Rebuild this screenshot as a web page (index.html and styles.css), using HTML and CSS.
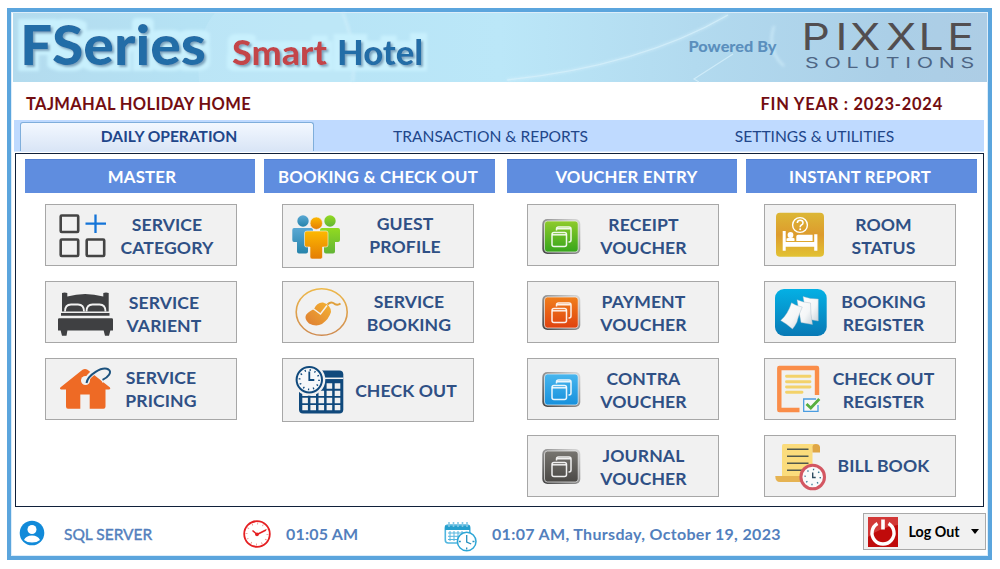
FILE: index.html
```html
<!DOCTYPE html>
<html lang="en">
<head>
<meta charset="utf-8">
<title>FSeries Smart Hotel</title>
<link rel="stylesheet" href="styles.css">
</head>
<body>
<svg class="defs" width="0" height="0">
  <defs>
    <linearGradient id="steel" x1="1" y1="0" x2="0" y2="1"><stop offset="0" stop-color="#ddd"/><stop offset=".45" stop-color="#999"/><stop offset="1" stop-color="#444"/></linearGradient>
    <linearGradient id="green" x1="0" y1="0" x2="0" y2="1"><stop offset="0" stop-color="#8fcb2c"/><stop offset="1" stop-color="#36a51c"/></linearGradient>
    <linearGradient id="orange" x1="0" y1="0" x2="0" y2="1"><stop offset="0" stop-color="#f07f1c"/><stop offset="1" stop-color="#e0420f"/></linearGradient>
    <linearGradient id="blue" x1="0" y1="0" x2="0" y2="1"><stop offset="0" stop-color="#48b6ee"/><stop offset="1" stop-color="#1690dc"/></linearGradient>
    <linearGradient id="gray" x1="0" y1="0" x2="0" y2="1"><stop offset="0" stop-color="#777570"/><stop offset="1" stop-color="#4b4946"/></linearGradient>
    <g id="windows" fill="none" stroke="#fff" stroke-opacity=".9" stroke-width="1.5">
      <path d="M29.500 26v-1.500q0-2 2-2h10.500q2 0 2 2v11q0 2-2 2h-.500M30 24.200h14"/>
      <rect x="25" y="28" width="14.500" height="14" rx="2"/><path d="M25 30.300h14.500"/>
    </g>
    <linearGradient id="pb" x1="0" y1="0" x2="0" y2="1"><stop offset="0" stop-color="#5aa8d4"/><stop offset="1" stop-color="#2583ab"/></linearGradient>
    <linearGradient id="pg" x1="0" y1="0" x2="0" y2="1"><stop offset="0" stop-color="#92da20"/><stop offset="1" stop-color="#62b436"/></linearGradient>
    <linearGradient id="po" x1="0" y1="0" x2="0" y2="1"><stop offset="0" stop-color="#fdb900"/><stop offset="1" stop-color="#e47d05"/></linearGradient>
    <linearGradient id="mouse" x1="1" y1="0" x2="0" y2="1"><stop offset="0" stop-color="#f5b331"/><stop offset="1" stop-color="#dd7d33"/></linearGradient>
    <linearGradient id="ring" x1="0" y1="0" x2="0" y2="1"><stop offset="0" stop-color="#edb84a"/><stop offset="1" stop-color="#cf8b50"/></linearGradient>
    <linearGradient id="gold" x1="0" y1="0" x2="0" y2="1"><stop offset="0" stop-color="#dcb735"/><stop offset=".5" stop-color="#dd9b2d"/><stop offset="1" stop-color="#e2c233"/></linearGradient>
    <linearGradient id="cyan" x1="0" y1="0" x2="0" y2="1"><stop offset="0" stop-color="#04b0e4"/><stop offset="1" stop-color="#0879b5"/></linearGradient>
    <linearGradient id="paper" x1="0" y1="0" x2="1" y2="1"><stop offset="0" stop-color="#fff"/><stop offset=".6" stop-color="#f4f6f7"/><stop offset="1" stop-color="#cbd5dc"/></linearGradient>
  </defs>
</svg>

<div class="window">
  <header class="banner">
    <svg width="974" height="69" viewBox="13 13 974 69">
      <defs>
        <linearGradient id="sky" x1="0" y1="0" x2="1" y2="0"><stop offset="0" stop-color="#b3dbee"/><stop offset=".18" stop-color="#b5e2f4"/><stop offset=".5" stop-color="#bbe7f8"/><stop offset=".7" stop-color="#b2daef"/><stop offset=".9" stop-color="#abcfe7"/><stop offset="1" stop-color="#adcde5"/></linearGradient>
        <filter id="soft" x="-10%" y="-20%" width="120%" height="150%"><feGaussianBlur stdDeviation="1.6"/></filter>
        <filter id="halo" filterUnits="userSpaceOnUse" x="13" y="13" width="460" height="69">
          <feMorphology in="SourceAlpha" operator="dilate" radius="6" result="fat"/>
          <feGaussianBlur in="fat" stdDeviation="1.6" result="fatSoft"/>
          <feFlood flood-color="#c8f0fd"/><feComposite in2="fatSoft" operator="in" result="glow"/>
          <feGaussianBlur in="SourceAlpha" stdDeviation="1.3" result="s"/><feOffset in="s" dx="1.5" dy="2.2" result="so"/>
          <feFlood flood-color="#336a97" flood-opacity=".7"/><feComposite in2="so" operator="in" result="shadow"/>
          <feMerge><feMergeNode in="glow"/><feMergeNode in="shadow"/><feMergeNode in="SourceGraphic"/></feMerge>
        </filter>
      </defs>
      <rect x="13" y="13" width="974" height="69" fill="url(#sky)"/>
      <path d="M215 13Q195 35 199 82H352Q356 45 343 13Z" fill="#c6ebf9" opacity=".4"/>
      <g fill="none" stroke="#d8f2fc" stroke-width="2" opacity=".75" filter="url(#soft)">
        <path d="M343 13Q357 45 353 82M507 80Q640 66 728 15M774 26Q766 50 784 66"/>
      </g>
      <path d="M733 54L694 79l5 3M507 80Q640 66 728 15" fill="none" stroke="#d5effa" stroke-width="1.200" opacity=".8"/>
      <g class="brand" filter="url(#halo)">
        <text x="20" y="65" font-size="56" fill="#206da7" textLength="186" lengthAdjust="spacingAndGlyphs">FSeries</text>
        <text x="232" y="65" font-size="34" fill="#c34449" textLength="95" lengthAdjust="spacingAndGlyphs">Smart</text>
        <text x="337" y="65" font-size="34" fill="#206da7" textLength="86" lengthAdjust="spacingAndGlyphs">Hotel</text>
      </g>
      <text class="powered" x="688.500" y="51.500" textLength="88" lengthAdjust="spacingAndGlyphs">Powered By</text>
      <text class="pixxle" transform="translate(802 50) scale(1.2 1)" x="-.500 28 40 70 97 121">PIXXLE</text>
      <text class="solutions" x="805" y="67.500" textLength="175" lengthAdjust="spacingAndGlyphs">SOLUTIONS</text>
    </svg>
  </header>

  <div class="company"><span class="name">TAJMAHAL HOLIDAY HOME</span><span class="year">FIN YEAR : 2023-2024</span></div>

  <nav class="tabs">
    <div class="tab active">DAILY OPERATION</div>
    <div class="tab second">TRANSACTION &amp; REPORTS</div>
    <div class="tab third">SETTINGS &amp; UTILITIES</div>
  </nav>

  <main class="panel">
    <section class="column">
      <h2>MASTER</h2>
      <button class="tile t-category">
        <svg viewBox="0 0 64 62"><g fill="none" stroke="#444" stroke-width="2.600"><rect x="15.700" y="11.500" width="17.500" height="16.500" rx="1"/><rect x="15.700" y="35.500" width="17.500" height="16.500" rx="1"/><rect x="41.700" y="35.500" width="17.500" height="16.500" rx="1"/></g><path d="M50.500 10.500V29M40.500 19.700H61" stroke="#1474d8" stroke-width="2.300"/></svg>
        <span>SERVICE<br>CATEGORY</span></button>
      <button class="tile t-varient">
        <svg viewBox="0 0 64 62"><g fill="#3f4042"><path d="M17 12q2.600-1 5.300 0v3.500Q40 10.500 58.300 15.500V12q2.700-1 5.400 0v18.500H17Z"/><path d="M16 32h48.500v2.700H16Z"/><path d="M13 38.500q0-1.200 1.200-1.200h52.600q1.200 0 1.200 1.200V49.500H13ZM15.500 49h7l-1 5.700h-4.500ZM58.500 49h7l-1.500 5.700H60Z"/></g><path d="M20 30.500q0-7 6-7h7q6 0 6 7M41.500 30.500q0-7 6-7h7q6 0 6 7" fill="none" stroke="#f1f1f1" stroke-width="1.800"/></svg>
        <span>SERVICE<br>VARIENT</span></button>
      <button class="tile t-pricing">
        <svg viewBox="0 0 64 62"><path d="M37.500 11.800Q40 10 42.500 11.800L65 29.500q1 1.700-.8 2H60.500v17q0 2.200-2 2.200H44.700V36.500h-9.400v14.200H23q-2 0-2-2.200v-17h-5q-1.800-.3-.7-2Z" fill="#ee6a25"/><circle cx="40.500" cy="22.500" r="4.500" fill="#f1f1f1"/><path d="M41 24.500C43 16 57 7 64 11.500C68 14 63 20 56.500 22.500" fill="none" stroke="#f1f1f1" stroke-width="5"/><path d="M41.500 25C43 17 57 8 63.500 11.500C67.500 14 63 19.500 57.500 21.800" fill="none" stroke="#1c527e" stroke-width="2"/></svg>
        <span>SERVICE<br>PRICING</span></button>
    </section>

    <section class="column">
      <h2>BOOKING &amp; CHECK OUT</h2>
      <button class="tile t-guest">
        <svg viewBox="0 0 64 62"><g fill="url(#pb)"><circle cx="21" cy="17" r="5.700"/><path d="M12 24h17q2 0 2 2v10q0 2-2 2h-3v9.500q0 2-2 2h-7q-2 0-2-2V38h-3q-1.700 0-1.700-2V26q0-2 1.700-2Z"/></g><g fill="url(#pg)"><circle cx="48" cy="17" r="5.700"/><path d="M40 24h16q2 0 2 2v10q0 2-2 2h-3v9.500q0 2-2 2h-7q-2 0-2-2V38h-4V26q0-2 2-2Z"/></g><g fill="url(#po)" stroke="#f1f1f1" stroke-width=".6"><circle cx="34.300" cy="19.200" r="6.200"/><path d="M25 27h19q2 0 2 2v12q0 2-2 2h-3.500v10q0 2-2 2h-8.500q-2 0-2-2V43H24.500q-2 0-2-2V29q0-2 2.500-2Z"/></g></svg>
        <span>GUEST<br>PROFILE</span></button>
      <button class="tile t-booking">
        <svg viewBox="0 0 64 62"><ellipse cx="39.700" cy="31" rx="25.500" ry="23.300" fill="none" stroke="url(#ring)" stroke-width="1.600"/><path d="M24 34Q26 31 32 28Q35 21 41 21.500Q49 24 49 31Q47 38 40 43Q34 46 27 42.500Q22 38 24 34Z" fill="url(#mouse)"/><path d="M31 27.500l7.500 5.500l6.500-8.500" fill="none" stroke="#f4f1ea" stroke-width="1.500"/><path d="M45.500 23.500q3.500-3.500 7-.7q3 2 6-.3" fill="none" stroke="#e0a03b" stroke-width="2"/></svg>
        <span>SERVICE<br>BOOKING</span></button>
      <button class="tile t-checkout">
        <svg viewBox="0 0 64 62"><rect x="17" y="12.500" width="44.300" height="43" rx="4" fill="#10497c"/><path d="M40 20.300H61.300" stroke="#f1f1f1" stroke-width="1.500"/><g stroke="#f1f1f1" stroke-width="5.300" stroke-dasharray="5.600 2.500"><path d="M44.600 28H59M20.300 35.300H59M20.300 42.500H59M20.300 49.700H59"/></g><circle cx="27.300" cy="21.700" r="16" fill="#f1f1f1"/><circle cx="27.300" cy="21.700" r="12.700" fill="#f6f8fa" stroke="#10497c" stroke-width="2"/><circle cx="27.300" cy="21.700" r="9.700" fill="none" stroke="#10497c" stroke-width="1.800" stroke-dasharray="1.300 3.780"/><path d="M27.300 13.500v8.500h5" fill="none" stroke="#10497c" stroke-width="1.800"/></svg>
        <span>CHECK OUT</span></button>
    </section>

    <section class="column">
      <h2>VOUCHER ENTRY</h2>
      <button class="tile t-voucher"><svg viewBox="0 -1 64 62"><rect x="15.300" y="14" width="38" height="35" rx="5" fill="url(#steel)"/><rect x="17.500" y="16" width="33.700" height="31" rx="3" fill="url(#green)" stroke="#f5f5f5" stroke-opacity=".75" stroke-width=".9"/><use href="#windows" y="-.5"/></svg><span>RECEIPT<br>VOUCHER</span></button>
      <button class="tile t-voucher"><svg viewBox="0 0 64 62"><rect x="15.300" y="14" width="38" height="35" rx="5" fill="url(#steel)"/><rect x="17.500" y="16" width="33.700" height="31" rx="3" fill="url(#orange)" stroke="#f5f5f5" stroke-opacity=".75" stroke-width=".9"/><use href="#windows" y="-.5"/></svg><span>PAYMENT<br>VOUCHER</span></button>
      <button class="tile t-voucher"><svg viewBox="0 0 64 62"><rect x="15.300" y="14" width="38" height="35" rx="5" fill="url(#steel)"/><rect x="17.500" y="16" width="33.700" height="31" rx="3" fill="url(#blue)" stroke="#f5f5f5" stroke-opacity=".75" stroke-width=".9"/><use href="#windows" y="-.5"/></svg><span>CONTRA<br>VOUCHER</span></button>
      <button class="tile t-voucher"><svg viewBox="0 0 64 62"><rect x="15.300" y="14" width="38" height="35" rx="5" fill="url(#steel)"/><rect x="17.500" y="16" width="33.700" height="31" rx="3" fill="url(#gray)" stroke="#f5f5f5" stroke-opacity=".75" stroke-width=".9"/><use href="#windows" y="-.5"/></svg><span>JOURNAL<br>VOUCHER</span></button>
    </section>

    <section class="column">
      <h2>INSTANT REPORT</h2>
      <button class="tile t-report">
        <svg viewBox="0 0 64 62"><rect x="12" y="8.700" width="48" height="44" rx="4" fill="url(#gold)"/><circle cx="36" cy="21" r="7.400" fill="none" stroke="#fff" stroke-width="1.400"/><path d="M33.300 19q.2-2.700 2.900-2.700t2.800 2.400q0 1.500-1.600 2.300-1.200.7-1.200 2.200" fill="none" stroke="#fff" stroke-width="1.600"/><circle cx="36.200" cy="25.300" r="1" fill="#fff"/><g fill="#fff"><path d="M18.700 27h3v11h28.500v-7.700h3.200v16.400h-3.200v-4H21.700v4h-3Z"/><circle cx="26.500" cy="31" r="2.900"/><path d="M22.500 37v-2.500q5-2 8 0V37ZM32.300 32.500q0-1.800 1.800-1.800h14.500v6.300H32.300Z"/></g></svg>
        <span>ROOM<br>STATUS</span></button>
      <button class="tile t-report">
        <svg viewBox="0 0 64 62"><rect x="11" y="8" width="51.700" height="47" rx="9" fill="url(#cyan)"/><g fill="url(#paper)" stroke="#9fb4c2" stroke-width=".4"><path d="M39 15.500Q46 18 54.300 18V40L43 38Z"/><path d="M33 18.700Q39 21.500 46.500 22Q46.500 33 48.500 43.500L37 41.500Z"/><path d="M27.500 21.700Q32 25 38.300 26Q34 36 33 41Q31 45 28.500 48Q23 43 16.700 39.500Q24 33 27.500 21.700Z"/></g></svg>
        <span>BOOKING<br>REGISTER</span></button>
      <button class="tile t-report">
        <svg viewBox="0 0 64 62"><path d="M53 37V10H15.300V52H35.500" fill="none" stroke="#fa8d49" stroke-width="4.400" stroke-linejoin="round"/><path d="M22.500 18.300H46M22.500 23.700H46M22.500 29H46M22.500 34.300H38" stroke="#f3d26a" stroke-width="2.900" stroke-linecap="round"/><path d="M52 41H39.700V53.300H54V47" fill="#f7f7f7" stroke="#4a9ce0" stroke-width="1.300"/><path d="M42.500 46l4.300 4 8.500-9" fill="none" stroke="#57ae3f" stroke-width="2.800"/></svg>
        <span>CHECK OUT<br>REGISTER</span></button>
      <button class="tile t-report t-bill">
        <svg viewBox="0 0 64 62"><path d="M19.500 9H52.500Q48.500 10 48.500 15V46H18V11Q18 9 19.500 9Z" fill="#fbdc7c"/><path d="M48.500 17.500V12q0-3 3.500-3t4 3v5.500Z" fill="#dfa645"/><path d="M11.300 41H39v6H16q-4.700 0-4.700-6Z" fill="#e6b352"/><path d="M23 14.300H44.500M23 21.300H44.500M23 28.300H44.500M23 35.200H40" stroke="#51584c" stroke-width="1.500"/><circle cx="48.700" cy="42" r="11.800" fill="#fafafa" stroke="#d35762" stroke-width="3"/><circle cx="48.700" cy="42" r="7.600" fill="none" stroke="#357691" stroke-width="1.500" stroke-dasharray="1.300 4.670"/><path d="M48.700 37.500V42.500h3" fill="none" stroke="#2f4b5f" stroke-width="1.400"/></svg>
        <span>BILL BOOK</span></button>
    </section>
  </main>

  <footer class="status">
    <svg class="user" width="26" height="26" viewBox="0 0 26 26"><circle cx="13" cy="13" r="12.300" fill="#118ad9"/><circle cx="13" cy="9.500" r="4.500" fill="#fff"/><path d="M5 20Q7 15.500 13 15.500T21 20Q18 22.500 13 22.500T5 20Z" fill="#fff"/></svg>
    <span class="server">SQL SERVER</span>
    <svg class="clock" width="28" height="28" viewBox="0 0 28 28"><circle cx="14" cy="14" r="12.800" fill="#fff" stroke="#e51f22" stroke-width="1.800"/><circle cx="14" cy="14" r="10.500" fill="none" stroke="#e98a85" stroke-width="2" stroke-dasharray=".8 4.700"/><path d="M9.500 10.500l4.500 4 9-4.500" fill="none" stroke="#e51f22" stroke-width="1.500"/><circle cx="14" cy="14.300" r="1.900" fill="#e51f22"/></svg>
    <span class="time">01:05 AM</span>
    <svg class="cal" width="33" height="31" viewBox="0 0 33 31"><rect x="1.300" y="4" width="24.500" height="18" rx="3" fill="#fff" stroke="#50b6df" stroke-width="1.600"/><path d="M1 4.500H26V9H1Z" fill="#269fcd"/><path d="M5 1v5M9.500 1v5M14 1v5M18.500 1v5M23 1v5" stroke="#85c8e4" stroke-width="1.600"/><path d="M4 12H23M4 15.300H18M4 18.500H14M6 10v10M10 10v10M14 10v10M18 10v6" stroke="#54b5de" stroke-width="1"/><circle cx="22.700" cy="20.500" r="9.300" fill="#fff" stroke="#2da6d6" stroke-width="1.500"/><path d="M22.700 14v7l4.500 2M22.700 26.500v2M14.800 20.500h2M28.500 20.500h2" fill="none" stroke="#238fbe" stroke-width="1.300"/></svg>
    <span class="date">01:07 AM, Thursday, October 19, 2023</span>
    <button class="logout">
      <svg width="30" height="30" viewBox="0 0 30 30"><rect width="30" height="30" fill="#c00b0b"/><path d="M0 0H30V8Q13 10 0 20Z" fill="#dc5150" opacity=".65"/><path d="M9.500 6.500A11 11 0 1 0 20.500 6.500" fill="none" stroke="#fff" stroke-width="3.400"/><path d="M15 2.500V12.500" stroke="#fff" stroke-width="3.600"/></svg>
      <span>Log Out</span><i class="caret"></i>
    </button>
  </footer>
</div>
</body>
</html>
```
FILE: styles.css
```css
* { box-sizing: border-box; }
body { margin: 0; padding: 8px 0 0 7px; background: #fff; font-family: Lato, "Liberation Sans", sans-serif; }
.defs { display: block; height: 0; }
.window { width: 985px; height: 552px; border: 4px solid #5ba5dd; padding: 1px 2px 0; background: #fff; display: flex; flex-direction: column; box-shadow: inset 0 0 0 1px #dcedfa; }
.banner { height: 69px; flex: none; }
.banner svg { display: block; overflow: visible; }
.brand { font-weight: 900; }
.powered { font-size: 15px; font-weight: 900; fill: #5b8fbd; }
.pixxle { font: 400 37px Inter, Lato, sans-serif; fill: #524e50; }
.solutions { font: 400 15px Inter, Lato, sans-serif; letter-spacing: 4px; fill: #4d6584; }

.company { height: 38px; flex: none; display: flex; justify-content: space-between; align-items: center; padding: 5px 43px 0 13px; color: #730d11; font-size: 16.5px; font-weight: 700; letter-spacing: .35px; }
.year { letter-spacing: .75px; }
.tabs { height: 32px; flex: none; margin: 0 2px 0 1px; padding: 2px 0 0 6px; display: flex; background: #bfdaff; border-bottom: 1px solid #d8e8ff; color: #21468a; font-size: 15.6px; }
.tab { display: flex; align-items: center; justify-content: center; padding-bottom: 1px; }
.tab.active { width: 294px; border: 1px solid #7faedb; border-bottom: 0; border-radius: 3px 3px 0 0; background: linear-gradient(#f3f8ff, #d9e5f6); font-weight: 700; padding: 0 0 2px 4px; }
.tab.second { width: 353px; }
.tab.third { width: 295px; }

.panel { height: 354px; flex: none; width: 969px; margin: 1px 0 0 2px; border: 1px solid #10203a; padding: 5px 6px 0 9px; display: grid; grid-template-columns: 230px 231px 230px 231px; column-gap: 9px; }
.column:nth-child(3), .column:nth-child(4) { margin-left: 3px; margin-right: -3px; }
.column { display: flex; flex-direction: column; align-items: flex-start; }
h2 { width: 100%; height: 34px; margin: 0 0 11px; flex: none; background: #5f8ddf; border-top: 1px solid #527fd2; color: #fff; font-size: 16.8px; line-height: 33px; letter-spacing: .2px; text-align: center; font-weight: 700; padding-left: 4px; }
.column:nth-child(even) h2 { padding: 0 3px 0 0; }
.column:nth-child(3) h2 { padding-left: 9px; }
.tile { position: relative; width: 192px; height: 62px; flex: none; margin: 0 0 15px 20px; padding: 0; border: 0; background: #f1f1f1; box-shadow: inset 0 0 0 1px #a7a7a7; display: flex; align-items: center; color: #2f5085; font: 700 17.6px/22.7px Lato, "Liberation Sans", sans-serif; letter-spacing: .1px; }
.column:nth-child(even) .tile { margin-left: 18px; }
.tile svg { width: 64px; height: 62px; flex: none; align-self: flex-start; overflow: visible; }
.tile span { flex: 1; white-space: nowrap; text-align: center; padding-top: 4px; }
.t-category { padding-right: 12px; }
.t-varient { padding-right: 18px; }
.t-varient span { padding-top: 6px; }
.t-pricing { padding-right: 24px; }
.t-pricing span { padding-top: 2px; }
.t-guest { padding-right: 10px; height: 64px; margin-bottom: 13px; }
.t-guest span { padding-top: 0; }
.t-checkout span { padding-top: 2px; }
.t-booking { padding-right: 2px; }
.t-checkout { padding-right: 8px; height: 64px; }
.t-voucher { padding-right: 23px; }
.t-report { padding-right: 17px; }
.t-bill span { padding-top: 0; }

.status { flex: 1; display: flex; align-items: flex-start; color: #537fbd; font-size: 16px; font-weight: 700; line-height: 20px; padding-left: 6px; white-space: nowrap; }
.status svg { flex: none; }
.user { margin-top: 13px; }
.server { width: 179px; margin: 17px 0 0 19px; font-weight: 400; font-size: 15.5px; -webkit-text-stroke: .4px; }
.clock { margin-top: 13px; }
.time { width: 157px; margin: 17px 0 0 15px; letter-spacing: .2px; }
.cal { margin: 14px 0 0 1px; }
.date { width: 372px; margin: 17px 0 0 15px; letter-spacing: .33px; }
.logout { width: 123px; height: 37px; margin: 6px -2px 0 -1px; padding: 0 0 0 4px; flex: none; border: 1px solid #a9a9a9; background: #f1f1f1; display: flex; align-items: center; font: 700 14.3px/20px Lato, "Liberation Sans", sans-serif; color: #000; }
.logout span { width: 63px; padding-left: 9px; }
.caret { width: 0; height: 0; margin-left: 10px; border: 4.5px solid transparent; border-top: 5px solid #000; border-bottom: 0; }
```
